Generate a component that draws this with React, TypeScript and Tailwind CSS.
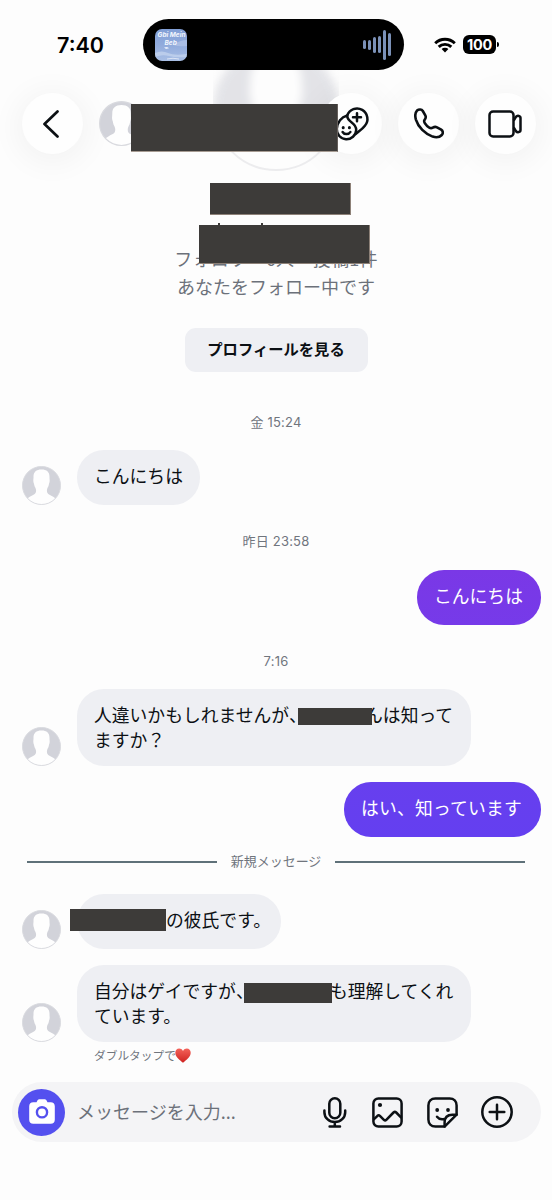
import type { ReactNode } from 'react'

const WAVE = [9, 10, 16, 17, 30, 23]

function Avatar({ className }: { className: string }) {
  return (
    <svg viewBox="0 0 40 40" className={className}>
      <clipPath id="face">
        <circle cx="20" cy="20" r="19.5" />
      </clipPath>
      <g clipPath="url(#face)">
        <rect width="40" height="40" fill="#d2d3da" />
        <path
          fill="#fefefe"
          d="M20 3.600c5.400 0 8.200 2.600 8.200 7.400 0 1.800.2 2.600.2 4.200 0 1.700-.6 2.300-.9 4.100-.3 2.200-1.700 3.200-1.900 5.300-.2 2.600.4 3.800 2.600 5 2.400 1.300 5 2.600 8.300 5.200V42H3.500v-7.200c3.300-2.600 5.900-3.900 8.300-5.200 2.200-1.200 2.800-2.400 2.600-5-.2-2.100-1.600-3.100-1.900-5.300-.3-1.800-.9-2.400-.9-4.100 0-1.600.2-2.400.2-4.200C11.800 6.200 14.600 3.600 20 3.600z"
        />
      </g>
      <circle cx="20" cy="20" r="19.500" fill="none" stroke="#d9dadf" strokeWidth="1" />
    </svg>
  )
}

function Redact({ className }: { className: string }) {
  return <span className={`relative z-10 block shrink-0 bg-[#3d3b39] ${className}`} />
}

function RoundButton({ className = '', children }: { className?: string; children: ReactNode }) {
  return (
    <button
      className={`flex size-[61px] shrink-0 items-center justify-center rounded-full bg-[#fefefe] shadow-[0_4px_30px_6px_rgba(0,0,0,0.045)] ${className}`}
    >
      {children}
    </button>
  )
}

function Stamp({ children }: { children: ReactNode }) {
  return (
    <div className="h-5 text-center font-['Inter','Noto_Sans_CJK_JP',sans-serif] text-[13px] leading-5 tracking-[0.2px] text-[#70757d]">
      {children}
    </div>
  )
}

function Incoming({ className = '', children }: { className?: string; children: ReactNode }) {
  return (
    <div className="flex items-end pl-[22px]">
      <Avatar className="mr-4 size-[39px] shrink-0" />
      <div className={`rounded-[27px] bg-[#eeeff3] pt-[13px] pl-[17px] text-[#0c1014] ${className}`}>{children}</div>
    </div>
  )
}

function Outgoing({ className, children }: { className: string; children: ReactNode }) {
  return (
    <div className={`mr-[11px] ml-auto h-[55px] rounded-[27px] pt-[13px] pl-[17px] text-white ${className}`}>
      {children}
    </div>
  )
}

function StatusBar() {
  return (
    <div className="relative flex h-[93px] items-start pt-[19px]">
      <div className="w-[143px] pl-[57px] font-['Inter'] text-[21.500px] leading-[52px] font-semibold text-black">7:40</div>
      <div className="flex h-[51px] w-[261px] items-center justify-between rounded-full bg-black pr-[13px] pl-3">
        <div className="size-8 overflow-hidden rounded-[7px] bg-linear-to-b from-[#829fd6] via-[#91abdc] to-[#a9bfe5]">
          <svg viewBox="0 0 32 32" className="size-8">
            <path d="M18 16q7-5 14-5v6q-8 1-14-1z" fill="#a9bde4" />
            <path d="M0 24q7-3 13 0t19 1v3q-11 1-18-1t-14 1z" fill="#c2d2ee" opacity=".8" />
            <path d="M9 18.500q3-1.500 5 .7l-3 .8z" fill="#e8effa" />
            <path d="M12 30q6-1.500 12 0" stroke="#dce5f5" strokeWidth="1" fill="none" />
            <g fontSize="6.500" fontWeight="700" fontStyle="italic" fontFamily="Inter" fill="#f2f6fd">
              <text x="2.500" y="7.500">Gbi Mein</text>
              <text x="9.500" y="15.500">Beb</text>
            </g>
          </svg>
        </div>
        <div className="flex items-center gap-[2px]">
          {WAVE.map((h, i) => (
            <span key={i} className="w-[3px] rounded-full bg-[#7b91b8]" style={{ height: h }} />
          ))}
        </div>
      </div>
      <svg viewBox="0 0 22 16" className="mt-[18px] ml-[30px] h-4 w-[22px]" fill="none" stroke="#000" strokeWidth="2.900">
        <path d="M1.200 6.200a14 14 0 0 1 19.600 0" />
        <path d="M4.700 9.900a9 9 0 0 1 12.600 0" />
        <path d="M11 15.500l-3.400-3.400a4.800 4.800 0 0 1 6.800 0z" fill="#000" stroke="none" />
      </svg>
      <div className="mt-4 ml-[7px] flex h-[19px] w-[33px] items-center justify-center rounded-[6px] bg-black font-['Inter'] text-[14.500px] font-bold tracking-[-0.200px] text-white">
        100
      </div>
      <span className="mt-[23px] ml-px h-[5px] w-[2px] rounded-r-full bg-black" />
    </div>
  )
}

function NavBar() {
  return (
    <div className="relative flex h-[61px] items-center pl-[22px]">
      <RoundButton>
        <svg viewBox="0 0 18 28" className="mr-[4px] h-7 w-[18px]" fill="none" stroke="#0c1014" strokeWidth="2.700" strokeLinecap="round" strokeLinejoin="round">
          <path d="M15.500 1.500L2.500 14l13 12.500" />
        </svg>
      </RoundButton>
      <Avatar className="ml-4 size-[45px] shrink-0" />
      <Redact className="mt-[11px] -ml-[13px] h-[48px] w-[207px] self-start border-r border-b border-r-[#665f5b] border-b-[#a79c93]" />
      <RoundButton className="-ml-[17px]">
        <svg viewBox="0 0 61 61" className="size-[61px]" fill="none" stroke="#0c1014" strokeWidth="2.500" strokeLinecap="round">
          <path d="M26.200 22.500a10.400 10.400 0 1 1 17.700 10.200C41 36.500 37.500 38.500 34.600 41.200" />
          <path d="M26.200 22.500c-5.800 1.500-10 6.700-10.400 13.500a9.700 9.700 0 1 0 19.400 1c0-3.800-1.700-5.600-4.500-7.600-2.700-1.900-4.500-3.700-4.500-6.900z" />
          <path d="M36 20.200v8M32 24.200h8M21.600 39c1.700 2.800 6.200 2.800 7.800 0" />
          <path d="M22.200 34.500v.3M28.400 34.500v.3" strokeWidth="3" />
        </svg>
      </RoundButton>
      <RoundButton className="ml-4">
        <svg viewBox="0 0 30 31" className="h-[31px] w-[30px]" fill="none" stroke="#0c1014" strokeWidth="2.600" strokeLinejoin="round">
          <path d="M3 2.600C5 .9 7.600 1.100 8.800 3L11.300 7.300C12.200 9 11.800 10.400 10.600 11.800C9.800 12.800 10 13.800 10.800 15.200C12 17.200 13.600 18.800 15.600 19.800C16.800 20.400 17.800 20.200 18.800 19.600C20.300 18.700 21.600 18.600 23 19.300L27.200 21.600C29.100 22.800 29.300 25.200 27.800 27C25.600 29.300 22.400 29.900 18.600 28.600C11 25.800 4.200 19.200 1.900 11.600C.9 8 1 4.800 3 2.600Z" />
        </svg>
      </RoundButton>
      <RoundButton className="ml-4">
        <svg viewBox="0 0 34 28" className="ml-[-1px] h-7 w-[34px]" fill="none" stroke="#0c1014" strokeWidth="2.500" strokeLinejoin="round">
          <rect x="1.500" y="1.500" width="24" height="25" rx="3.600" />
          <path d="M25.700 10.500l2.200-3.600c1.500-1.800 4.600-1.200 4.600 1.100v12c0 2.300-3.100 2.900-4.600 1.100l-2.200-3.600" />
        </svg>
      </RoundButton>
    </div>
  )
}

function Profile() {
  return (
    <div className="flex flex-col items-center pt-[29px]">
      <Redact className="mr-[-8px] h-[32px] w-[141px] border-r border-b border-[#8d8178]" />
      <div className="relative mt-[29px] w-full text-center text-[18px] leading-7 text-[#6c717a]">
        <div className="tracking-[0.3px]">フォロワー6人・投稿1件</div>
        <div>あなたをフォロー中です</div>
        <div className="absolute top-[-21px] left-[198px] flex w-[60px] gap-[41px] pl-[20px]">
          <span className="h-[3px] w-[2px] shrink-0 bg-[#3d3b39]" />
          <span className="h-[3px] w-[2px] shrink-0 bg-[#3d3b39]" />
        </div>
        <span className="absolute top-[-19px] left-[199px] h-[39px] w-[171px] border-r border-b border-r-[#8d8178] border-b-[#8d8178] bg-[#3d3b39]" />
      </div>
      <button className="mt-[28px] h-11 w-[183px] rounded-[11px] bg-[#eeeff3] pb-[3px] text-[15.300px] font-bold text-[#0c1014]">
        プロフィールを見る
      </button>
    </div>
  )
}

function Composer() {
  return (
    <div className="mt-[17px] mr-[11px] ml-3 flex h-[60px] shrink-0 items-center rounded-full bg-[#f4f4f6] pl-[6px]">
      <div className="flex size-[47px] items-center justify-center rounded-full bg-[#5450ef]">
        <svg viewBox="0 0 26 25" className="mb-[2px] h-[25px] w-[26px]">
          <path
            fill="#fff"
            d="M8.300 1.800C8.800.8 9.500.3 10.500.3h5c1 0 1.700.5 2.200 1.500l.8 1.400h3.300c2.400 0 4 1.600 4 4v13.500c0 2.400-1.600 4-4 4H4.200c-2.400 0-4-1.600-4-4V7.200c0-2.400 1.600-4 4-4h3.300z"
          />
          <circle cx="13" cy="13.300" r="5.100" fill="none" stroke="#5450ef" strokeWidth="2.400" />
        </svg>
      </div>
      <div className="ml-3 w-[246px] pb-px text-[18px] text-[#6c717a]">メッセージを入力...</div>
      <svg viewBox="0 0 24 31" className="h-[31px] w-6" fill="none" stroke="#0c1014" strokeWidth="2.500" strokeLinecap="round">
        <rect x="6.300" y="1.300" width="11" height="20" rx="5.500" />
        <path d="M1.400 13.500v1.700c0 5.500 4.500 9.900 10.400 9.900s10.400-4.400 10.400-9.900v-1.700M11.800 25.500v3.700M6.600 29.500h10.400" />
      </svg>
      <svg viewBox="0 0 31 31" className="ml-[25px] size-[31px]" fill="none" stroke="#0c1014" strokeWidth="2.500" strokeLinejoin="round">
        <rect x="1.400" y="1.400" width="28.200" height="28.200" rx="5" />
        <circle cx="8" cy="8" r="2.100" fill="#0c1014" stroke="none" />
        <path d="M1.500 22.600l4-3.800q1.200-1 2.400.1l4 3.900q1.200 1.100 2.400 0l7.200-7.300q1.400-1.200 2.700 0l5.300 5.300" />
      </svg>
      <svg viewBox="0 0 31 31" className="ml-6 size-[31px]" fill="none" stroke="#0c1014" strokeWidth="2.500" strokeLinecap="round" strokeLinejoin="round">
        <path d="M29.600 17.600V8.400c0-4.200-2.700-7-7-7H8.400c-4.300 0-7 2.800-7 7v14.200c0 4.200 2.700 7 7 7h9.200z" />
        <path d="M29.600 17.700h-4.200c-5 0-7.800 2.800-7.800 7.800v4M10 19.800c1.500 2 4.200 2.900 7.300 2.200" />
        <circle cx="10.200" cy="13" r="1.900" fill="#0c1014" stroke="none" />
        <circle cx="21" cy="13" r="1.900" fill="#0c1014" stroke="none" />
      </svg>
      <svg viewBox="0 0 32 32" className="ml-[23px] size-8" fill="none" stroke="#0c1014" strokeWidth="2.500" strokeLinecap="round">
        <circle cx="16" cy="16" r="14.700" />
        <path d="M16 8.700v14.600M8.700 16h14.600" />
      </svg>
    </div>
  )
}

export default function App() {
  return (
    <div className="relative flex h-[1200px] w-[552px] flex-col overflow-hidden bg-[#fdfdfd] font-['Noto_Sans_CJK_JP',sans-serif] text-[17.800px] leading-[25px]">
      {/* profile picture scrolled under the header */}
      <Avatar className="absolute top-[45px] left-[213px] size-[126px] opacity-60 blur-[4px] [clip-path:inset(0_0_20px_0)]" />
      <div className="absolute top-[45px] left-[213px] size-[126px] rounded-full border-2 border-[#ececee] [clip-path:inset(106px_0_0_0)]" />
      <StatusBar />
      <NavBar />
      <Profile />

      <div className="mt-10">
        <Stamp>金 15:24</Stamp>
      </div>
      <div className="mt-[18px]">
        <Incoming className="h-[55px] w-[123px]">こんにちは</Incoming>
      </div>
      <div className="mt-[26px]">
        <Stamp>昨日 23:58</Stamp>
      </div>
      <div className="mt-[19px] flex">
        <Outgoing className="w-[124px] bg-linear-to-b from-[#7a38e6] to-[#763ae9]">こんにちは</Outgoing>
      </div>
      <div className="mt-[26px]">
        <Stamp>7:16</Stamp>
      </div>
      <div className="mt-[18px]">
        <Incoming className="h-[77px] w-[394px] whitespace-nowrap">
          <div className="flex">
            人違いかもしれませんが
            <span className="w-[9px]">、</span>
            <Redact className="mt-[6px] h-[17px] w-[74px]" />
            <span className="-ml-[7px]">んは知って</span>
          </div>
          ますか？
        </Incoming>
      </div>
      <div className="mt-4 flex">
        <Outgoing className="w-[197px] bg-linear-to-b from-[#673fee] to-[#643ff0] tracking-[0.200px]">
          はい、知っています
        </Outgoing>
      </div>

      <div className="mt-[15px] flex h-5 items-center px-[27px] text-[13px] text-[#70757d]">
        <span className="h-[1.500px] w-[190px] bg-[#5f7179]" />
        <span className="flex-1 pb-[3px] text-center">新規メッセージ</span>
        <span className="h-[1.500px] w-[190px] bg-[#5f7179]" />
      </div>

      <div className="mt-[22px]">
        <Incoming className="flex h-[55px] w-[204px] whitespace-nowrap">
          <Redact className="mt-[2px] -ml-6 h-[22px] w-[96px]" />
          の彼氏です。
        </Incoming>
      </div>
      <div className="mt-4">
        <Incoming className="h-[77px] w-[394px] whitespace-nowrap">
          <div className="flex">
            自分はゲイですが
            <span className="w-[8px]">、</span>
            <Redact className="mt-[5px] h-[20px] w-[88px]" />
            <span className="-ml-[2px]">も理解してくれ</span>
          </div>
          ています。
        </Incoming>
      </div>
      <div className="mt-[3px] flex h-5 items-center pl-[94px] text-[11.700px] leading-5 text-[#70757d]">
        ダブルタップで
        <svg viewBox="0 0 16 15" className="-ml-px h-[15px] w-4">
          <linearGradient id="heart" x1="0" y1="0" x2="0" y2="1">
            <stop offset="0" stopColor="#f4635a" />
            <stop offset="1" stopColor="#cf2220" />
          </linearGradient>
          <path
            fill="url(#heart)"
            d="M8 3C7 1.200 5.700.5 4.200.5 1.900.5.300 2.300.3 4.800c0 4.200 4.400 7.300 7.700 9.900 3.300-2.600 7.700-5.700 7.700-9.900 0-2.500-1.600-4.300-3.900-4.300C10.300.5 9 1.200 8 3z"
          />
        </svg>
      </div>
      <Composer />
    </div>
  )
}
